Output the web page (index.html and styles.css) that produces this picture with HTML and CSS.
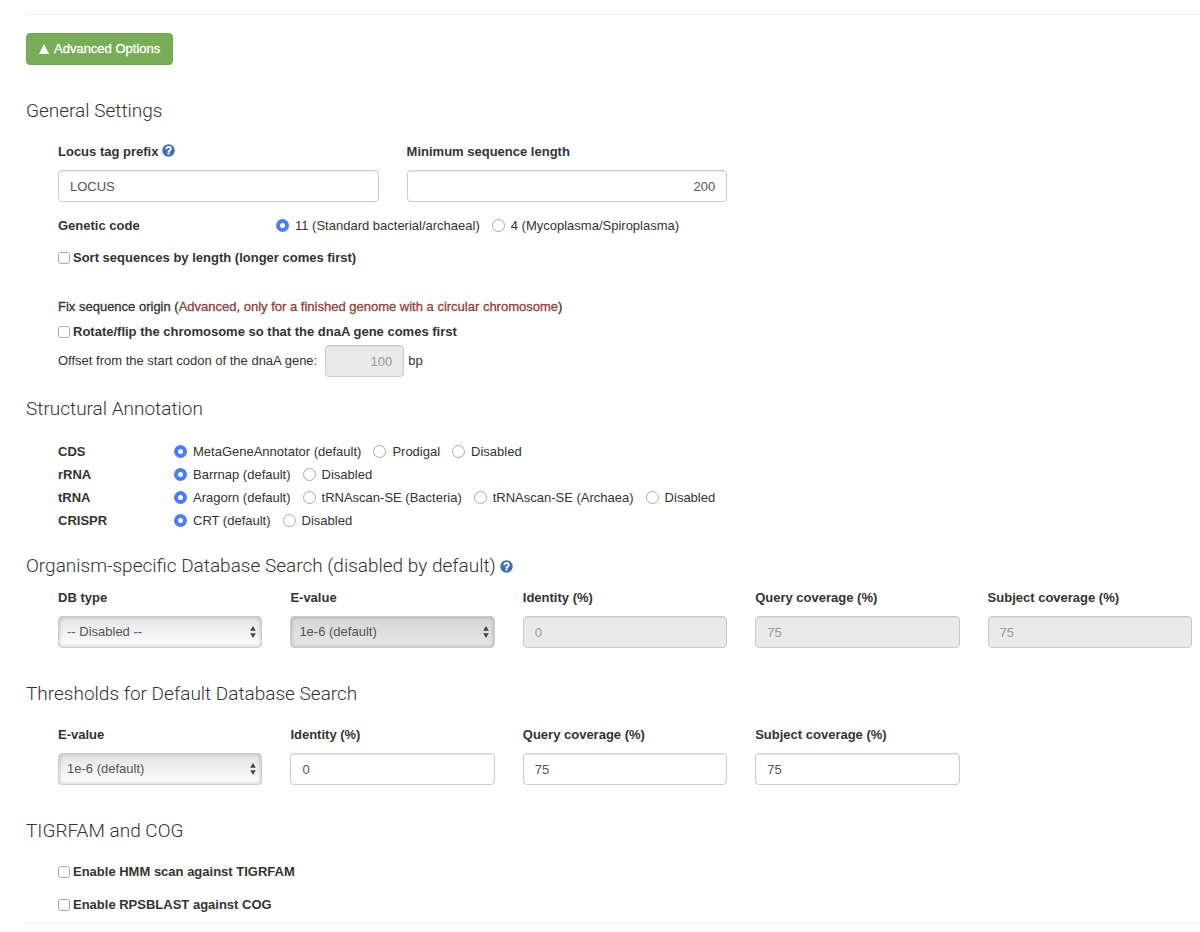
FILE: index.html
```html
<!DOCTYPE html>
<html lang="en">
<head>
    <meta charset="utf-8">
    <title>Advanced Options</title>
    <link rel="stylesheet" href="styles.css">
</head>
<body>
    <svg width="0" height="0" class="defs">
        <symbol id="help" viewBox="0 0 13 13">
            <circle cx="6.5" cy="6.5" r="6.2" fill="#3f6fb3"/>
            <path d="M4.3 5.2C4.3 3.7 5.2 3 6.6 3c1.3 0 2.2.7 2.2 1.9C8.8 6.2 7.2 6.3 7.2 7.5H5.7" fill="none" stroke="#fff" stroke-width="1.8"/>
            <rect x="5.5" y="8.8" width="2" height="1.7" fill="#fff"/>
        </symbol>
        <symbol id="arrows" viewBox="0 0 6 12">
            <path d="M3 0L5.8 4.8H0.2zM3 12L0.2 7.2H5.8z" fill="#444"/>
        </symbol>
    </svg>

    <form class="options">
        <hr>
        <button type="button" class="btn"><svg width="10" height="10" viewBox="0 0 10 10"><path d="M5 0L10 10H0z" fill="#fff"/></svg>Advanced Options</button>

        <section class="general">
            <h2>General Settings</h2>
            <div class="panel">
                <div class="row">
                    <div class="field wide">
                        <label for="locus">Locus tag prefix <a href="#" aria-label="Help on locus tag prefix"><svg class="help"><use href="#help"/></svg></a></label>
                        <input type="text" id="locus" class="control" value="LOCUS">
                    </div>
                    <div class="field wide">
                        <label for="minlen">Minimum sequence length</label>
                        <input type="text" id="minlen" class="control right" value="200">
                    </div>
                </div>
                <div class="line genetic">
                    <b>Genetic code</b>
                    <label><input type="radio" name="code" checked>11 (Standard bacterial/archaeal)</label>
                    <label><input type="radio" name="code">4 (Mycoplasma/Spiroplasma)</label>
                </div>
                <label class="check"><input type="checkbox">Sort sequences by length (longer comes first)</label>
                <p class="origin">Fix sequence origin (<span class="danger">Advanced, only for a finished genome with a circular chromosome</span>)</p>
                <label class="check"><input type="checkbox">Rotate/flip the chromosome so that the dnaA gene comes first</label>
                <div class="offset">
                    <label for="offset">Offset from the start codon of the dnaA gene:</label>
                    <input type="text" id="offset" class="control right" value="100" disabled>
                    <span>bp</span>
                </div>
            </div>
        </section>

        <section class="structural">
            <h2>Structural Annotation</h2>
            <div class="panel">
                <div class="line">
                    <b>CDS</b>
                    <label><input type="radio" name="cds" checked>MetaGeneAnnotator (default)</label>
                    <label><input type="radio" name="cds">Prodigal</label>
                    <label><input type="radio" name="cds">Disabled</label>
                </div>
                <div class="line">
                    <b>rRNA</b>
                    <label><input type="radio" name="rrna" checked>Barrnap (default)</label>
                    <label><input type="radio" name="rrna">Disabled</label>
                </div>
                <div class="line">
                    <b>tRNA</b>
                    <label><input type="radio" name="trna" checked>Aragorn (default)</label>
                    <label><input type="radio" name="trna">tRNAscan-SE (Bacteria)</label>
                    <label><input type="radio" name="trna">tRNAscan-SE (Archaea)</label>
                    <label><input type="radio" name="trna">Disabled</label>
                </div>
                <div class="line">
                    <b>CRISPR</b>
                    <label><input type="radio" name="crispr" checked>CRT (default)</label>
                    <label><input type="radio" name="crispr">Disabled</label>
                </div>
            </div>
        </section>

        <section class="organism">
            <h2>Organism-specific Database Search (disabled by default) <a href="#" aria-label="Help on organism-specific search"><svg class="help"><use href="#help"/></svg></a></h2>
            <div class="panel row">
                <div class="field">
                    <label for="dbtype">DB type</label>
                    <div class="select">
                        <select id="dbtype" class="control"><option>-- Disabled --</option></select>
                        <svg><use href="#arrows"/></svg>
                    </div>
                </div>
                <div class="field">
                    <label for="evalue1">E-value</label>
                    <div class="select">
                        <select id="evalue1" class="control" disabled><option>1e-6 (default)</option></select>
                        <svg><use href="#arrows"/></svg>
                    </div>
                </div>
                <div class="field">
                    <label for="identity1">Identity (%)</label>
                    <input type="text" id="identity1" class="control" value="0" disabled>
                </div>
                <div class="field">
                    <label for="query1">Query coverage (%)</label>
                    <input type="text" id="query1" class="control" value="75" disabled>
                </div>
                <div class="field">
                    <label for="subject1">Subject coverage (%)</label>
                    <input type="text" id="subject1" class="control" value="75" disabled>
                </div>
            </div>
        </section>

        <section>
            <h2>Thresholds for Default Database Search</h2>
            <div class="panel row">
                <div class="field">
                    <label for="evalue2">E-value</label>
                    <div class="select">
                        <select id="evalue2" class="control"><option>1e-6 (default)</option></select>
                        <svg><use href="#arrows"/></svg>
                    </div>
                </div>
                <div class="field">
                    <label for="identity2">Identity (%)</label>
                    <input type="text" id="identity2" class="control" value="0">
                </div>
                <div class="field">
                    <label for="query2">Query coverage (%)</label>
                    <input type="text" id="query2" class="control" value="75">
                </div>
                <div class="field">
                    <label for="subject2">Subject coverage (%)</label>
                    <input type="text" id="subject2" class="control" value="75">
                </div>
            </div>
        </section>

        <section>
            <h2>TIGRFAM and COG</h2>
            <div class="panel">
                <label class="check"><input type="checkbox">Enable HMM scan against TIGRFAM</label>
                <label class="check"><input type="checkbox">Enable RPSBLAST against COG</label>
            </div>
        </section>
        <hr class="end">
    </form>
</body>
</html>
```

FILE: styles.css
```css
* {
    box-sizing: border-box;
}
body {
    margin: 0;
    font-family: "Liberation Sans", Arial, sans-serif;
    font-size: 13px;
    line-height: 18px;
    color: #333;
    background: #fff;
}
.defs {
    position: absolute;
}
.options {
    padding: 14px 0 8px 26px;
}
hr {
    margin: 0;
    border: 0;
    border-top: 1px solid #eee;
}
.end {
    margin-top: 9px;
}
.btn {
    display: flex;
    align-items: center;
    gap: 5px;
    height: 32px;
    margin-top: 18px;
    padding: 0 12px;
    font: inherit;
    color: #fff;
    background: #77ad57;
    border: 1px solid #72a852;
    border-radius: 4px;
    -webkit-text-stroke: 0.3px #fff;
}
section {
    margin-top: 35px;
}
.structural {
    margin-top: 21px;
}
.organism {
    margin-top: 23px;
}
h2 {
    margin: 0 0 21px;
    font-family: Roboto, "Liberation Sans", sans-serif;
    font-size: 19px;
    font-weight: 300;
    line-height: 22px;
}
.structural h2 {
    margin-bottom: 20px;
}
.organism h2 {
    margin-bottom: 12px;
}
.panel {
    padding: 0 8px 0 32px;
}
.row {
    display: grid;
    grid-template-columns: repeat(10, minmax(0, 1fr));
    gap: 28px;
}
.field {
    grid-column: span 2;
}
.wide {
    grid-column: span 3;
}
.field > label {
    display: block;
    margin-bottom: 9px;
    font-weight: bold;
}
.help {
    width: 13px;
    height: 13px;
    vertical-align: -1px;
}
.control {
    display: block;
    width: 100%;
    height: 32px;
    padding: 0 11px;
    font: inherit;
    color: #555;
    background: #fff;
    border: 1px solid #ccc;
    border-radius: 4px;
    box-shadow: inset 0 1px 1px rgba(0, 0, 0, 0.08);
}
.control:disabled {
    color: #999;
    background: #eaeaea;
    opacity: 1;
}
.right {
    text-align: right;
}
.select {
    position: relative;
}
.select svg {
    position: absolute;
    top: 10px;
    right: 6px;
    width: 6px;
    height: 12px;
    pointer-events: none;
}
select.control {
    appearance: none;
    padding: 0 8px;
    background: linear-gradient(#e4e4e4, #fff);
    box-shadow: inset 0 0 4px rgba(0, 0, 0, 0.25);
}
select.control:disabled {
    color: #555;
    background: linear-gradient(#d8d8d8, #dedede 50%, #e8e8e8);
}
.line {
    display: flex;
    align-items: center;
    height: 23px;
}
.line b {
    width: 116px;
}
.line label {
    display: flex;
    align-items: center;
    gap: 6px;
    margin-right: 12px;
}
.genetic {
    margin: 12px 0;
}
.genetic b {
    width: 218px;
}
input[type="radio"],
input[type="checkbox"] {
    appearance: none;
    flex: none;
    margin: 0;
    background: #fff;
    border: 1px solid #aaa;
}
input[type="radio"] {
    width: 13px;
    height: 13px;
    border-radius: 50%;
}
input[type="radio"]:checked {
    background: #fff;
    border: 4px solid #4a7dfb;
}
input[type="checkbox"] {
    width: 12px;
    height: 12px;
    border-radius: 3px;
}
.check {
    display: flex;
    align-items: center;
    gap: 3px;
    font-weight: bold;
}
.check + .check {
    margin-top: 15px;
}
.origin {
    margin: 31px 0 7px;
    -webkit-text-stroke: 0.3px currentColor;
}
.danger {
    color: #8f3f3c;
}
.offset {
    display: flex;
    align-items: center;
    gap: 4px;
    margin-top: 4px;
}
.offset label {
    margin-right: 4px;
}
.offset .control {
    width: 79px;
}
```
